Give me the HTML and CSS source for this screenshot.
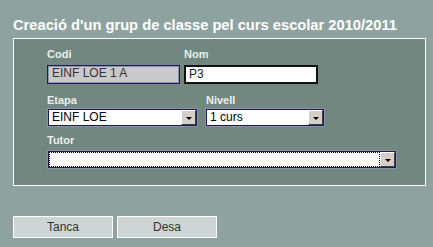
FILE: index.html
```html
<!DOCTYPE html>
<html>
<head>
<meta charset="utf-8">
<link rel="stylesheet" href="styles.css">
</head>
<body>
<h1 class="title">Creació d'un grup de classe pel curs escolar 2010/2011</h1>
<div class="panel">
  <div class="row row1">
    <div class="field f-codi">
      <div class="label">Codi</div>
      <div class="input readonly">EINF LOE 1 A</div>
    </div>
    <div class="field f-nom">
      <div class="label">Nom</div>
      <div class="input plain">P3</div>
    </div>
  </div>
  <div class="row row2">
    <div class="field f-etapa">
      <div class="label">Etapa</div>
      <div class="select"><span class="val">EINF LOE</span><span class="arrow"><i></i></span></div>
    </div>
    <div class="field f-nivell">
      <div class="label">Nivell</div>
      <div class="select"><span class="val">1 curs</span><span class="arrow"><i></i></span></div>
    </div>
  </div>
  <div class="row row3">
    <div class="field f-tutor">
      <div class="label">Tutor</div>
      <div class="select focus"><span class="val"></span><span class="arrow"><i></i></span></div>
    </div>
  </div>
</div>
<div class="buttons">
  <div class="btn">Tanca</div>
  <div class="btn">Desa</div>
</div>
</body>
</html>
```
FILE: styles.css
```css
html, body {
  margin: 0;
  padding: 0;
}
body {
  background: #8ea39f;
  width: 433px;
  height: 247px;
  overflow: hidden;
  font-family: "Liberation Sans", Arial, sans-serif;
}
.title {
  margin: 0;
  padding: 16px 0 0 13px;
  height: 22px;
  font-size: 14.7px;
  line-height: 18px;
  font-weight: bold;
  color: #ffffff;
}
.panel {
  box-sizing: border-box;
  margin-left: 13px;
  width: 413px;
  height: 148px;
  border: 1px solid #ffffff;
  background: #72877f;
  padding: 9px 0 0 33px;
  display: flex;
  flex-direction: column;
}
.row {
  display: flex;
}
.row1 { gap: 4px; }
.row2 { gap: 9px; margin-top: 10px; }
.row3 { margin-top: 8px; }
.label {
  font-size: 11px;
  line-height: 13px;
  font-weight: bold;
  color: #eaefed;
}
.row1 .label { margin-bottom: 4px; }
.row2 .label { margin-bottom: 2px; }
.row3 .label { margin-bottom: 4px; }
.input {
  box-sizing: border-box;
  height: 19px;
  font-size: 12px;
  line-height: 15px;
  padding-left: 4px;
  color: #222;
}
.f-codi .input { width: 133px; }
.f-nom .input { width: 134px; }
.readonly {
  background: #c9c9cb;
  border: 1px solid #1c1c60;
  box-shadow: inset 0 0 0 1px #8d90ad;
  color: #333;
}
.plain {
  background: #ffffff;
  border: 2px solid #111111;
  padding-left: 3px;
  line-height: 15px;
}
.select {
  box-sizing: border-box;
  height: 17px;
  background: #ffffff;
  border: 1px solid #1b1b58;
  box-shadow: 0 0 0 1px #8c92ad;
  display: flex;
  align-items: stretch;
  position: relative;
}
.f-etapa .select { width: 149px; margin-left: 1px; }
.f-nivell .select { width: 118px; }
.f-tutor .select { width: 348px; margin-left: 1px; }
.val {
  flex: 1;
  font-size: 12px;
  line-height: 15px;
  padding-left: 3px;
  color: #000;
}
.focus .val {
  outline: 1px dotted #000;
  outline-offset: -1px;
}
.arrow {
  box-sizing: border-box;
  width: 15px;
  background: #d4d0c8;
  border-top: 1px solid #ffffff;
  border-left: 1px solid #ffffff;
  border-right: 1px solid #404040;
  border-bottom: 1px solid #404040;
  display: flex;
  align-items: center;
  justify-content: center;
}
.arrow i {
  display: block;
  width: 0;
  height: 0;
  border-left: 3px solid transparent;
  border-right: 3px solid transparent;
  border-top: 3px solid #000;
  margin-top: 1px;
}
.buttons {
  display: flex;
  gap: 4px;
  margin: 30px 0 0 13px;
}
.btn {
  box-sizing: border-box;
  width: 100px;
  height: 22px;
  background: #cdd5d5;
  border: 1px solid #ffffff;
  font-size: 12px;
  line-height: 20px;
  text-align: center;
  color: #333;
}
```
